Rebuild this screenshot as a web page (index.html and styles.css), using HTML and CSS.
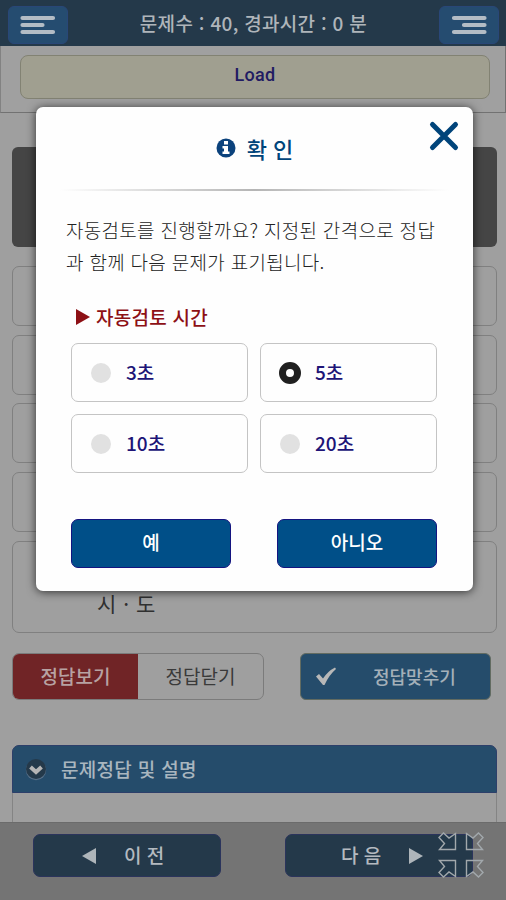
FILE: index.html
```html
<!DOCTYPE html>
<html lang="ko">
<head>
<meta charset="utf-8">
<title>확인</title>
<link rel="stylesheet" href="styles.css">
</head>
<body>
<div class="app">
  <header class="topbar">
    <button class="menu-btn" aria-label="menu"><svg width="36" height="20" viewBox="0 0 36 20"><path d="M2.500 3H33M2.500 10H22.500M2.500 17H33"/></svg></button>
    <h1 class="top-title">문제수 : 40, 경과시간 : 0 분</h1>
    <button class="menu-btn" aria-label="list"><svg width="36" height="20" viewBox="0 0 36 20"><path d="M3 3H33.500M13 10H33.500M3 17H33.500"/></svg></button>
  </header>
  <div class="toolbar"><button class="load">Load</button></div>
  <main class="content">
    <div class="question"></div>
    <div class="option"></div>
    <div class="option"></div>
    <div class="option"></div>
    <div class="option"></div>
    <div class="option tall">시 · 도</div>
    <div class="actions">
      <div class="toggle"><button class="show">정답보기</button><button class="hide">정답닫기</button></div>
      <button class="check"><svg width="22" height="19" viewBox="0 0 22 19"><path d="M1 9.500L4 7L8 11.500Q13 4 20 0.500L21 2Q14 8 9.500 18H8Z"/></svg><span>정답맞추기</span></button>
    </div>
    <section class="panel">
      <h2 class="panel-head"><svg width="22" height="23" viewBox="0 0 22 23"><circle class="rim" cx="11" cy="12" r="10.200"/><circle class="disc" cx="11" cy="11" r="10"/><path d="M5.500 9L11 14L16.500 9"/></svg><span>문제정답 및 설명</span></h2>
    </section>
  </main>
  <footer class="bottombar">
    <button class="nav prev"><svg width="14" height="16" viewBox="0 0 14 16"><path d="M14 0V16L0 8Z"/></svg><span>이 전</span></button>
    <button class="nav next"><span>다 음</span><svg width="14" height="16" viewBox="0 0 14 16"><path d="M0 0V16L14 8Z"/></svg></button>
  </footer>
  <svg class="shrink" width="48" height="48" viewBox="0 0 48 48">
    <defs><path id="arrow" d="M18.500 18.500H2.500L7.500 12.500L2 6.500L6.500 2L12 7L18.500 2.500Z"/></defs>
    <use href="#arrow"/>
    <use href="#arrow" transform="translate(48 0) scale(-1 1)"/>
    <use href="#arrow" transform="translate(0 48) scale(1 -1)"/>
    <use href="#arrow" transform="translate(48 48) scale(-1 -1)"/>
  </svg>
  <div class="modal" role="dialog">
    <button class="close" aria-label="close"><svg width="32" height="32" viewBox="0 0 32 32"><path d="M4.500 4.500L27.500 27.500M27.500 4.500L4.500 27.500"/></svg></button>
    <h2 class="modal-title"><svg width="20" height="20" viewBox="0 0 20 20"><circle cx="10" cy="10" r="9.500"/><path d="M8 3H12V6.500H8ZM6.500 8H12V13.500H13.500V16H6.500V13.500H8V10.500H6.500Z"/></svg><span>확 인</span></h2>
    <div class="rule"></div>
    <p class="message">자동검토를 진행할까요? 지정된 간격으로 정답<br>과 함께 다음 문제가 표기됩니다.</p>
    <h3 class="subhead"><svg width="14" height="16" viewBox="0 0 14 16"><path d="M0 0V16L14 8Z"/></svg><span>자동검토 시간</span></h3>
    <div class="choices">
      <label class="choice"><i class="radio"></i><span>3초</span></label>
      <label class="choice"><i class="radio on"></i><span>5초</span></label>
      <label class="choice"><i class="radio"></i><span>10초</span></label>
      <label class="choice"><i class="radio"></i><span>20초</span></label>
    </div>
    <div class="confirm"><button>예</button><button>아니오</button></div>
  </div>
</div>
</body>
</html>
```

FILE: styles.css
```css
* { box-sizing: border-box; margin: 0; padding: 0; }
body { font-family: "Noto Sans CJK KR", sans-serif; background: #9f9f9f; overflow: hidden; }
button { font: inherit; color: inherit; border: 0; background: none; }
svg { display: block; flex: none; }
.app { position: relative; width: 506px; height: 900px; overflow: hidden; display: flex; flex-direction: column; }
.topbar { height: 46px; flex: none; background: #24394a; display: flex; justify-content: space-between; align-items: flex-start; padding: 6px 7px 0 8px; }
.menu-btn { width: 60px; height: 38px; border-radius: 6px; background: #254c70; border: 1px solid #294778; display: flex; align-items: center; justify-content: center; }
.menu-btn path { fill: none; stroke: #b3bcc5; stroke-width: 4.200; stroke-linecap: round; }
.top-title { font-size: 19px; line-height: 34px; font-weight: 500; color: #afb5ba; white-space: nowrap; letter-spacing: .3px; }
.toolbar { height: 67px; flex: none; padding: 9px 15px 0 19px; border: 1px solid #727272; border-top: 0; border-left: 1px solid #828282; background: #a0a0a0; }
.load { display: block; width: 100%; height: 44px; border: 1px solid #828273; border-radius: 8px; background: #a09f90; color: #211b63; font: 500 18px/38px Roboto, sans-serif; padding-bottom: 4px; letter-spacing: .3px; }
.content { flex: 1; min-height: 0; padding: 34px 9px 0 12px; overflow: hidden; }
.question { height: 100px; background: #454545; border-radius: 6px; margin-bottom: 19px; }
.option { height: 60px; border: 1px solid #808080; border-radius: 7px; margin-bottom: 8.700px; }
.option.tall { height: 92px; margin-bottom: 20px; padding: 43px 0 0 84px; font-size: 21px; line-height: 36px; letter-spacing: .5px; color: #303030; }
.actions { display: flex; justify-content: space-between; height: 47px; padding-right: 6px; margin-bottom: 45px; font-size: 18px; }
.toggle { display: flex; width: 252px; border: 1px solid #7b7b7b; border-radius: 7px; overflow: hidden; font-size: 19px; line-height: 44px; color: #3a3a3a; }
.show { width: 125px; background: #702426; color: #b7a2a2; font-weight: 500; }
.hide { flex: 1; }
.check { width: 191px; border: 1px solid #626b61; border-radius: 6px; background: #254c6b; color: #a4b0b9; display: flex; align-items: center; gap: 36px; padding-left: 14px; font-weight: 500; }
.check path { fill: #b8b8b8; }
.panel { height: 200px; border: 1px solid #848484; border-radius: 7px 7px 0 0; }
.panel-head { height: 48px; margin: -1px -1px 0; border: 1px solid #2d3f6a; border-radius: 7px 7px 0 0; background: #254c6b; color: #a9b6bf; display: flex; align-items: center; gap: 14px; padding-left: 12px; font-size: 19px; font-weight: 500; letter-spacing: .3px; }
.panel-head svg { margin-top: 2px; }
.rim { fill: #587088; }
.disc { fill: #24394a; }
.panel-head path { fill: none; stroke: #b5b5b5; stroke-width: 4; }
.bottombar { height: 78px; flex: none; background: #747474; border-top: 1px solid #6b6b6b; display: flex; justify-content: space-between; padding: 11px 33px 0; }
.nav { width: 188px; height: 43px; border: 1px solid #2b345c; border-radius: 7px; background: #24394a; color: #b4bac0; font-size: 19px; font-weight: 500; display: flex; align-items: center; }
.nav span { margin-top: -2px; }
.nav svg { fill: #aeb5ba; }
.prev { gap: 28px; padding-left: 48px; }
.next { gap: 28px; padding-left: 55px; }
.shrink { position: absolute; left: 437px; top: 831px; }
.shrink use { fill: none; stroke: #a2a8ac; stroke-width: 1.400; }
.modal { position: absolute; left: 36px; top: 107px; width: 437px; height: 484px; background: #fefefe; border-radius: 7px; box-shadow: 0 1px 10px rgba(0,0,0,.7); padding: 0 24px; }
.close { position: absolute; right: 13px; top: 13px; }
.close path { stroke: #00447a; stroke-width: 5; stroke-linecap: round; }
.modal-title { display: flex; align-items: center; justify-content: center; gap: 11px; height: 82px; font-size: 22px; font-weight: 500; color: #00447a; }
.modal-title circle { fill: #0b427c; }
.modal-title path { fill: #fff; }
.rule { height: 2px; background: linear-gradient(90deg, transparent, #b5b5b5 50%, transparent); }
.message { margin-top: 23px; padding-left: 6px; font-size: 19px; line-height: 32px; font-weight: 300; letter-spacing: .3px; color: #222; white-space: nowrap; }
.subhead { display: flex; align-items: center; gap: 6px; height: 30px; margin: 24px 0 11px 16px; font-size: 19px; font-weight: 500; letter-spacing: .25px; color: #8d1015; white-space: nowrap; }
.subhead span { margin-top: -2px; }
.subhead path { fill: #8d1015; }
.choices { display: grid; grid-template-columns: 177px 177px; grid-auto-rows: 59px; gap: 12px; margin-left: 11px; }
.choice { border: 1px solid #c4c4c4; border-radius: 7px; display: flex; align-items: center; gap: 15px; padding-left: 19px; font-size: 19px; font-weight: 500; color: #201477; }
.choice span { margin-top: -2px; }
.radio { width: 20px; height: 20px; border-radius: 50%; background: #e1e1e1; }
.radio.on { background: #fff; border: 7px solid #202020; width: 22px; height: 22px; margin: 0 -1px; }
.confirm { display: flex; justify-content: space-between; margin: 46px 12px 0 11px; }
.confirm button { width: 160px; height: 49px; border: 1px solid #141480; border-radius: 7px; background: #004f88; color: #fff; font-size: 19px; line-height: 44px; padding-bottom: 3px; font-weight: 500; }
```
